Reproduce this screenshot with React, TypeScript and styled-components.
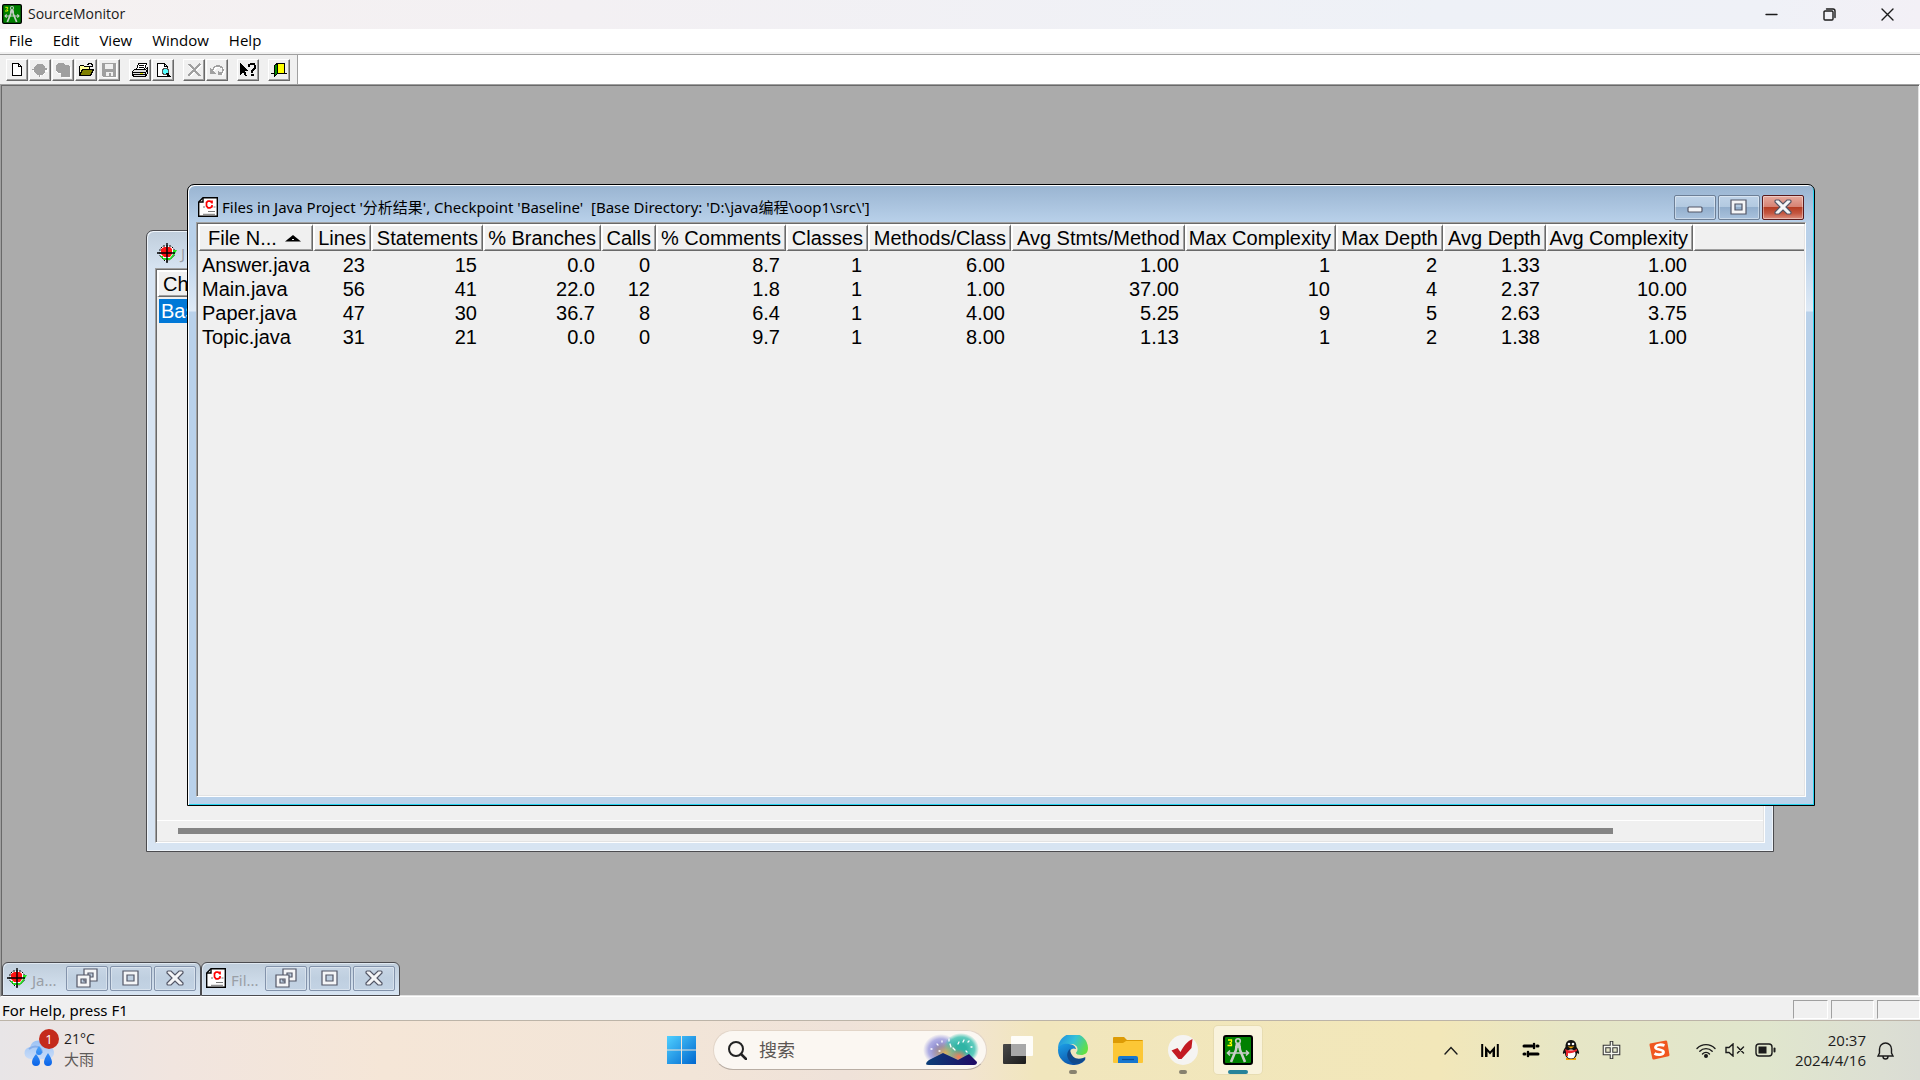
import React from "react";
import styled, { createGlobalStyle, css } from "styled-components";

const ui = `"Open Sans", "Noto Sans CJK SC", sans-serif`;
const caption = `"Noto Sans", "Noto Sans CJK SC", sans-serif`;
const grid = `"Liberation Sans", "Noto Sans CJK SC", sans-serif`;

const Global = createGlobalStyle`
  * { box-sizing: border-box; }
  body { margin: 0; overflow: hidden; font-family: ${ui}; font-size: 14px; color: #000; }
  button { font: inherit; color: inherit; padding: 0; margin: 0; border: 0; background: none; }
  svg { display: block; flex: none; }
`;

const Screen = styled.div`
  height: 100vh;
  display: flex;
  flex-direction: column;
  background: #f0f0f0;
`;

/* ---------- application frame ---------- */

const TitleBar = styled.header`
  height: 29px;
  display: flex;
  align-items: center;
  gap: 6px;
  padding: 0 4px 1px 2px;
  background: linear-gradient(90deg, #f5f1f1, #f3f0f3 30%, #eef1f7 75%, #eff1f7 92%, #f3f0f6);
`;
const AppTitle = styled.h1`
  flex: 1;
  margin: 0;
  font-size: 14px;
  line-height: 20px;
  font-weight: 400;
  color: #1a1a1a;
`;
const CaptionButtons = styled.div`
  display: flex;
`;
const CaptionButton = styled.button`
  width: 58px;
  height: 28px;
  display: grid;
  place-items: center;
`;
const MenuBar = styled.nav`
  height: 23px;
  display: flex;
  align-items: center;
  background: #fff;
`;
const MenuItem = styled.button`
  padding: 0 10px;
  font-size: 15px;
  line-height: 23px;
  &:first-child { padding-left: 9px; }
`;
const ToolbarRow = styled.div`
  height: 32px;
  display: flex;
  border-top: 2px solid #f0f0f0;
  background: #fff;
`;
const Toolbar = styled.div`
  width: 298px;
  display: flex;
  align-items: center;
  gap: 9px;
  padding-left: 6px;
  background: #f0f0f0;
  border-top: 1px solid #a0a0a0;
  border-right: 1px solid #a0a0a0;
`;
const ToolbarRest = styled.div`
  flex: 1;
  border-top: 1px solid #a0a0a0;
`;
const ToolGroup = styled.div`
  display: flex;
  gap: 1px;
`;
const ToolButton = styled.button`
  width: 22px;
  height: 22px;
  display: grid;
  place-items: center;
  background: #f0f0f0;
  border: 1px solid;
  border-color: #fff #696969 #696969 #fff;
  box-shadow: inset -1px -1px #a0a0a0;
`;

/* ---------- MDI area ---------- */

const Workspace = styled.main`
  position: relative;
  flex: 1;
  min-height: 0;
  display: flex;
  align-items: flex-end;
  padding-left: 1px;
  background: #ababab;
  border: 1px solid;
  border-color: #a0a0a0 #fff #fff #a0a0a0;
  box-shadow: inset 1px 1px #696969, inset -1px -1px #e3e3e3;
`;
const ChildWindow = styled.section<{ $active?: boolean; $left: number; $top: number }>`
  position: absolute;
  left: ${(p) => p.$left}px;
  top: ${(p) => p.$top}px;
  width: 1628px;
  height: 622px;
  display: flex;
  flex-direction: column;
  padding: 0 7px 7px;
  border: 1px solid ${(p) => (p.$active ? "#000" : "#4b4b4f")};
  border-radius: 7px 7px 0 0;
  ${(p) =>
    p.$active
      ? css`
          background: linear-gradient(#99b4d1, #b9d1ea 38px, #b9d1ea 60px, #dfeaf6 126px, #b9d1ea 127px);
          box-shadow: inset 1px 1px #fff, inset -1px -1px #25d2ee;
        `
      : css`
          background: linear-gradient(#bfcddb, #d7e4f2 38px);
          box-shadow: inset 1px 1px #eef4fa, inset -1px -1px #eef4fa;
        `}
`;
const WindowTitle = styled.div`
  height: 37px;
  flex: none;
  display: flex;
  align-items: center;
  gap: 4px;
  padding: 7px 3px 0 3px;
`;
const WindowName = styled.h2<{ $dim?: boolean }>`
  flex: 1;
  margin: 0;
  font-family: ${caption};
  font-size: 15px;
  line-height: 20px;
  font-weight: 400;
  white-space: pre;
  color: ${(p) => (p.$dim ? "#9a9fa6" : "#000")};
`;
const GlassButtons = styled.div`
  display: flex;
  gap: 2px;
`;
const GlassButton = styled.button<{ $close?: boolean }>`
  width: 42px;
  height: 25px;
  display: grid;
  place-items: center;
  border: 1px solid ${(p) => (p.$close ? "#5a1a1c" : "#6d7f96")};
  border-radius: 2px;
  background: ${(p) =>
    p.$close
      ? "linear-gradient(#e6a99d, #d68273 48%, #b53d24 50%, #c45640 75%, #dc8f80)"
      : "linear-gradient(#bfd3e8, #b2c9e0 48%, #93afcd 50%, #a9c2dd)"};
  box-shadow: inset 0 0 0 1px rgba(255, 255, 255, 0.4);
`;
const Client = styled.div`
  flex: 1;
  min-height: 0;
  margin: 0 1px 1px;
  display: flex;
  flex-direction: column;
  background: #f0f0f0;
  border: 1px solid;
  border-color: #a0a0a0 #fff #fff #a0a0a0;
  box-shadow: inset 1px 1px #696969, inset -1px -1px #e3e3e3;
  padding: 1px;
`;
const ListView = styled.table`
  width: 100%;
  table-layout: fixed;
  border-collapse: separate;
  border-spacing: 0;
  font-family: ${grid};
  font-size: 20px;
  line-height: 24px;
`;
const HeadCell = styled.th`
  padding: 0 0 2px;
  font-weight: 400;
  text-align: right;
  white-space: nowrap;
`;
const HeadFace = styled.div<{ $first?: boolean; $last?: boolean; $inset?: number }>`
  height: 27px;
  display: flex;
  align-items: center;
  justify-content: ${(p) => (p.$first ? "flex-start" : "flex-end")};
  gap: 8px;
  padding: 0 4px 0 ${(p) => p.$inset ?? 0}px;
  border: solid;
  border-width: 2px ${(p) => (p.$last ? 0 : 1)}px 1px 2px;
  border-color: #fff #696969 #696969 #fff;
  box-shadow: inset ${(p) => (p.$last ? 0 : -1)}px -1px #a0a0a0;
`;
const Cell = styled.td<{ $inset?: number }>`
  height: 24px;
  padding: 0 6px 0 0;
  text-align: right;
  white-space: nowrap;
  &:first-child { padding: 0 0 0 ${(p) => p.$inset ?? 4}px; text-align: left; }
`;
const SelectedText = styled.span`
  display: block;
  padding-left: 2px;
  color: #fff;
  background: #0078d7;
`;
const ScrollTrack = styled.div`
  margin-top: auto;
  height: 21px;
  padding: 7px 150px 0 21px;
  border-top: 1px solid #fff;
`;
const ScrollThumb = styled.div`
  height: 6px;
  background: #858585;
`;
const MinimizedWindow = styled.section`
  width: 199px;
  height: 34px;
  display: flex;
  align-items: center;
  gap: 4px;
  padding: 0 4px 2px;
  border: 1px solid #4b4b4f;
  border-radius: 6px 6px 0 0;
  background: linear-gradient(#bfcddb, #d7e4f2);
  box-shadow: inset 1px 1px #dfe8f1;
`;
const MinimizedName = styled.span`
  flex: 1;
  padding: 3px 0 0 1px;
  font-family: ${caption};
  font-size: 15px;
  line-height: 20px;
  white-space: nowrap;
  color: #9a9fa6;
`;
const MiniButton = styled.button`
  width: 42px;
  height: 25px;
  display: grid;
  place-items: center;
  border: 1px solid #8393ab;
  border-radius: 2px;
  background: linear-gradient(#c8d6e5, #bfcfe0 48%, #c3d3e4);
  box-shadow: inset 0 0 0 1px rgba(255, 255, 255, 0.35);
`;
const StatusBar = styled.footer`
  height: 23px;
  display: flex;
  align-items: stretch;
  gap: 3px;
  padding: 3px 0 1px 2px;
  background: #f0f0f0;
`;
const StatusText = styled.span`
  flex: 1;
  font-family: ${caption};
  font-size: 15px;
  line-height: 20px;
`;
const StatusPane = styled.span<{ $width: number }>`
  width: ${(p) => p.$width}px;
  border: 1px solid;
  border-color: #a0a0a0 #fff #fff #a0a0a0;
`;

/* ---------- desktop taskbar ---------- */

const Taskbar = styled.footer`
  height: 60px;
  flex: none;
  display: grid;
  grid-template-columns: 1fr auto 1fr;
  align-items: center;
  box-shadow: inset 0 1px #bcb4a8;
  background: linear-gradient(90deg, #e8e5e7 0, #f1e5df 9%, #f5e6d7 20%, #f2e5d8 36%, #efe2d9 44%, #f2e4d2 50%, #f1e6bd 54%, #f2e7b9 75%, #e6e6c6 82%, #e0e6cd 92%, #dcdfd3 98%, #dadcd4);
`;
const Weather = styled.button`
  justify-self: start;
  display: flex;
  align-items: center;
  gap: 4px;
  padding: 0 0 2px 24px;
  text-align: left;
  font-size: 14px;
  line-height: 20px;
`;
const WeatherText = styled.span`
  display: flex;
  flex-direction: column;
  color: #1c1c1c;
`;
const Muted = styled.span`
  font-size: 15px;
  color: #5e5a58;
`;
const TaskCenter = styled.div`
  display: flex;
  align-items: center;
  gap: 7px;
`;
const TaskButton = styled.button<{ $active?: boolean; $running?: boolean }>`
  position: relative;
  width: 48px;
  height: 48px;
  display: grid;
  place-items: center;
  border-radius: 4px;
  background: ${(p) => (p.$active ? "#f9f3dd" : "none")};
  box-shadow: ${(p) => (p.$active ? "0 0 0 1px rgba(190,180,140,.18)" : "none")};
  &::after {
    content: "";
    display: ${(p) => (p.$running ? "block" : "none")};
    position: absolute;
    bottom: 0;
    width: ${(p) => (p.$active ? 20 : 8)}px;
    height: 4px;
    border-radius: 2px;
    background: ${(p) => (p.$active ? "#27839a" : "#88826f")};
  }
`;
const Search = styled.label`
  width: 274px;
  height: 40px;
  display: flex;
  align-items: center;
  gap: 12px;
  padding: 0 7px 0 14px;
  border: 1px solid #e2d5c8;
  border-bottom-color: #b9aea4;
  border-radius: 20px;
  background: #fbf7f2;
`;
const SearchInput = styled.input`
  flex: 1;
  min-width: 0;
  height: 28px;
  padding: 0;
  border: 0;
  outline: 0;
  background: none;
  font-family: ${ui};
  font-size: 18px;
  color: #5b5653;
  &::placeholder { color: #5b5653; opacity: 1; }
`;
const Tray = styled.div`
  justify-self: end;
  display: flex;
  align-items: center;
  padding-right: 16px;
`;
const TrayButton = styled.button<{ $width: number }>`
  width: ${(p) => p.$width}px;
  height: 40px;
  display: grid;
  place-items: center;
`;
const Clock = styled.button`
  width: 81px;
  font-size: 15px;
  line-height: 20px;
  text-align: right;
  color: #1c1c1c;
`;
const ClockLine = styled.span`
  display: block;
`;

/* ---------- icons ---------- */

const CompassIcon = ({ size }: { size: number }) => (
  <svg width={size} height={size} viewBox="0 0 30 30">
    <rect x="1" y="1" width="28" height="28" rx="2" fill="#008000" stroke="#000" strokeWidth="2" />
    <path d="M5 5h3.500v2l-1.500 1 1.500 1v1.500h-4" fill="none" stroke="#ff0" strokeWidth="1.300" />
    <g fill="none" stroke="#c8cdc8" strokeWidth="1.600">
      <circle cx="15" cy="6" r="2.300" />
      <path d="M14 8.500 13 15 8 27M16 8.500 17 15l5 12" strokeWidth="2.600" />
      <path d="M5 18h20M7 15.500 4.500 18 7 20.500M23 15.500l2.500 2.500-2.500 2.500" />
      <path d="M12 12h6" />
    </g>
  </svg>
);

const TargetIcon = () => (
  <svg width="20" height="20" viewBox="0 0 20 20">
    <path d="M6 3h8l3 3v7l-6 5H8l-5-5V6z" fill="#fff" stroke="#000" strokeDasharray="2 1" />
    <path d="M3 13h3v2h7l3-4V7h4l-4 7-3 3H7z" fill="#1fe01f" />
    <path d="M7 4h6l2 2v5l-2 3H7l-3-3V6z" fill="#f11" />
    <path d="M10 0v20M0 10h18" stroke="#000" strokeWidth="1.400" />
  </svg>
);

const ReportIcon = () => (
  <svg width="20" height="20" viewBox="0 0 20 20">
    <path d="M5 .7h14.300v18.600H.7V5z" fill="#fff" stroke="#000" strokeWidth="1.400" />
    <path d="M5 1v4H1" fill="none" stroke="#000" strokeWidth="1.400" />
    <path d="M14 3.500v3M14 5h-1l-1-.8h-2L8.500 5.500v3.500l1.500 1.800h2l2-1V8" fill="none" stroke="#f00" strokeWidth="1.700" />
    <path d="M10 14.500h7M5 17.300h12M5 10h2M15.500 10h2" stroke="#777" strokeWidth="1" />
  </svg>
);

const tool = (children: React.ReactNode) => (
  <svg width="16" height="16" viewBox="0 0 16 16" shapeRendering="crispEdges">
    {children}
  </svg>
);

const toolIcons = {
  New: tool(<path d="M3.500 1.500h6l3 3v9h-9zM9.500 1.500v3h3" fill="#fff" stroke="#000" />),
  Add: tool(
    <>
      <path d="M8 2v2h3l2 2v1h3v3h-3v1l-2 2H9v2H8v-2H6l-3-2v-1H1V8h2V6l2-2h2V2z" fill="#fff" />
      <path d="M7 1v1h3l3 3v1h2v2h-2v2l-3 3H8v2H7v-2H5l-3-3V8H0V7h2V5l3-3h2V1z" fill="#a0a0a0" />
    </>
  ),
  "Add all": tool(
    <>
      <path d="M2 2h7l2 2h3l2 2v10H7v-4H4l-3-2z" fill="#fff" />
      <path d="M3 1h5l2 2h3l2 2v10H6v-4H3L1 9V3z" fill="#a0a0a0" />
    </>
  ),
  Open: tool(
    <>
      <path d="M1.500 13.500v-9l1-1h3l1 1h5v3" fill="#ff9" stroke="#000" />
      <path d="M1.500 13.500l3-6h11l-3 6z" fill="#808000" stroke="#000" />
      <path d="M9 2.500h1l1-1h2l1 1v2M12 4.500h3" fill="none" stroke="#000" />
    </>
  ),
  Save: tool(
    <>
      <path d="M2 2h14v14H2z" fill="#fff" />
      <path d="M1 1h14v14H2l-1-1z" fill="#a0a0a0" />
      <path d="M4 2h8v5H4zM5 10h7v4h-2v-3H8v3H5z" fill="#f0f0f0" />
    </>
  ),
  Print: tool(
    <>
      <path d="M4.500 7.500l2-6h8l-2 6z" fill="#fff" stroke="#000" />
      <path d="M7 3.500h5M6.500 5.500h5" stroke="#000" />
      <path d="M.5 9.500l2-2h11l2-2v6l-2 3h-11l-2-1z" fill="#ddd" stroke="#000" />
      <path d="M1 10.500h12v4M1 12.500h12M13.500 10.500l2-3" fill="none" stroke="#000" />
      <path d="M8 11h3v1H8z" fill="#dd0" />
    </>
  ),
  "Print preview": tool(
    <>
      <path d="M2.500 1.500h7l3 3v10h-10zM9.500 1.500v3h3" fill="#fff" stroke="#000" />
      <path d="M8 6h4v1h1v4h-1v1H8v-1H7V7h1z" fill="#5ff" stroke="#555" />
      <path d="M12 11l3 4" stroke="#000" strokeWidth="2" />
    </>
  ),
  Delete: tool(
    <>
      <path d="M4 4l10 10M15 3L4 14" stroke="#fff" strokeWidth="2" />
      <path d="M3 2l11 12M14 2L2 14" stroke="#a0a0a0" strokeWidth="2" />
    </>
  ),
  Undo: tool(
    <>
      <path d="M5 9a5 4.500 0 1 1 8 4" fill="none" stroke="#fff" strokeWidth="2" />
      <path d="M4 8a5 4.500 0 1 1 8 4" fill="none" stroke="#a0a0a0" strokeWidth="1.500" />
      <path d="M1 6v6h6zM9 9v4h4v-2z" fill="#a0a0a0" />
    </>
  ),
  "Context help": tool(
    <>
      <path d="M0 1l8 8H5l2 5H5l-2-4-3 3z" fill="#000" />
      <path d="M9 5V3l2-1h3l1 2v2l-3 3v2M11 13h3" fill="none" stroke="#000" strokeWidth="2" />
    </>
  ),
  Exit: tool(
    <>
      <path d="M5.500 1.500h8v10h-8z" fill="#ff0" stroke="#000" />
      <path d="M3.500 3.500l3-2v10l-3 3z" fill="#080" stroke="#000" />
      <path d="M0 11.500h3M13 11.500h3" stroke="#000" />
    </>
  ),
};
const toolGroups: (keyof typeof toolIcons)[][] = [
  ["New", "Add", "Add all", "Open", "Save"],
  ["Print", "Print preview"],
  ["Delete", "Undo"],
  ["Context help"],
  ["Exit"],
];

const glyph = (children: React.ReactNode) => (
  <svg width="22" height="20" viewBox="0 0 22 20" fill="#f4f5f7" stroke="#535666" strokeWidth="1.200">
    {children}
  </svg>
);
const MinGlyph = () => glyph(<rect x="4" y="10" width="14" height="5" rx="1" />);
const MaxGlyph = () => glyph(<path fillRule="evenodd" d="M3 3h15v14H3zM7 7v6h7V7z" />);
const RestoreGlyph = () =>
  glyph(
    <>
      <path fillRule="evenodd" d="M8 1h13v12H8zM12 5v4h5V5z" />
      <path fillRule="evenodd" d="M1 7h13v12H1zM5 11v4h5v-4z" />
    </>
  );
const CloseGlyph = () =>
  glyph(<path d="M3 4q0-1 1-1h3l4 4 4-4h3q1 0 1 1v1l-5 5 5 5v1q0 1-1 1h-3l-4-4-4 4H4q-1 0-1-1v-1l5-5-5-5z" />);

const line = (w: number, h: number, children: React.ReactNode) => (
  <svg width={w} height={h} viewBox={`0 0 ${w} ${h}`} fill="none" stroke="#1b1b1b" strokeWidth="1.400" strokeLinecap="round">
    {children}
  </svg>
);

const WeatherIcon = () => (
  <svg width="36" height="40" viewBox="0 0 36 40">
    <defs>
      <linearGradient id="cloud" x1="0" y1="0" x2="0" y2="1">
        <stop offset="0" stopColor="#9cc3f5" />
        <stop offset="1" stopColor="#c9dcf8" />
      </linearGradient>
      <linearGradient id="drop" x1="0" y1="0" x2="0" y2="1">
        <stop offset="0" stopColor="#4aa3fb" />
        <stop offset="1" stopColor="#0a63e8" />
      </linearGradient>
    </defs>
    <path d="M7 30a6 6 0 0 1-1-12 9 9 0 0 1 17-1 6.500 6.500 0 0 1 1 13z" fill="url(#cloud)" />
    <path d="M5 20c6-5 13-2 13 4" fill="none" stroke="#87afea" strokeWidth="2" />
    <path d="M15 17q3 4 3 6a3 3 0 0 1-6 0q0-2 3-6zM12 25q4 5 4 8a4 4 0 0 1-8 0q0-3 4-8zM24 24q4 6 4 9a4 4 0 0 1-8 0q0-3 4-9z" fill="url(#drop)" />
    <circle cx="25" cy="10" r="10" fill="#c42b1c" />
    <text x="25" y="15" textAnchor="middle" fontFamily="Open Sans" fontSize="13" fill="#fff">1</text>
  </svg>
);

const StartIcon = () => (
  <svg width="30" height="30" viewBox="0 0 30 30">
    <defs>
      <linearGradient id="start" x1="0" y1="0" x2="1" y2="1">
        <stop offset="0" stopColor="#50d0ff" />
        <stop offset="1" stopColor="#0067cf" />
      </linearGradient>
    </defs>
    <path d="M0 1h14v13.500H0zM15 1h14v13.500H15zM0 15.500h14V29H0zM15 15.500h14V29H15z" fill="url(#start)" />
  </svg>
);

const FireworksIcon = () => (
  <svg width="56" height="34" viewBox="0 0 56 34">
    <defs>
      <radialGradient id="glowA"><stop offset="0.200" stopColor="#8380c9" /><stop offset="0.700" stopColor="#8f8fdc" stopOpacity=".7" /><stop offset="1" stopColor="#9a9ae0" stopOpacity="0" /></radialGradient>
      <radialGradient id="glowB"><stop offset="0.300" stopColor="#2fb4a5" /><stop offset="0.750" stopColor="#39c0b0" stopOpacity=".8" /><stop offset="1" stopColor="#39c0b0" stopOpacity="0" /></radialGradient>
      <radialGradient id="glowC"><stop offset="0" stopColor="#d9b25c" /><stop offset="1" stopColor="#c5a76a" stopOpacity="0" /></radialGradient>
      <radialGradient id="glowD"><stop offset="0" stopColor="#ff7a50" /><stop offset="1" stopColor="#ff7a50" stopOpacity="0" /></radialGradient>
      <linearGradient id="hills" x1="0" x2="1"><stop offset="0" stopColor="#0c3f78" /><stop offset="1" stopColor="#1f0a66" /></linearGradient>
    </defs>
    <ellipse cx="18" cy="17" rx="18" ry="16" fill="url(#glowA)" />
    <ellipse cx="38" cy="16" rx="18" ry="16" fill="url(#glowB)" />
    <ellipse cx="22" cy="20" rx="14" ry="11" fill="url(#glowC)" />
    <ellipse cx="36" cy="24" rx="9" ry="8" fill="url(#glowD)" />
    <path d="M3 31q0-2 3-4l14-7 15 7 11-6 8 8q0 3-3 3H6q-3 0-3-1z" fill="url(#hills)" />
    <g stroke="#fff" strokeWidth="1.300" strokeLinecap="round">
      <path d="M8 16h1M14 11l1 1M19 8v1M26 6v2M16 18h1M27 11l1 3M30 15l2 2M35 11l1-2M40 9l1-2M45 9l1-1M48 14h1M43 18l1 1" />
    </g>
  </svg>
);

const TaskViewIcon = () => (
  <svg width="32" height="30" viewBox="0 0 32 30">
    <defs>
      <linearGradient id="tvd" x1="0" y1="0" x2="1" y2="1"><stop offset="0" stopColor="#4a4a4a" /><stop offset="1" stopColor="#1c1c1c" /></linearGradient>
    </defs>
    <rect x="1" y="9" width="23" height="20" rx="1" fill="url(#tvd)" />
    <rect x="9" y="1" width="22" height="20" rx="1" fill="#fff" fillOpacity=".9" />
    <rect x="9" y="9" width="15" height="12" fill="#a8a8a8" />
  </svg>
);

const EdgeIcon = () => (
  <svg width="30" height="30" viewBox="0 0 30 30">
    <defs>
      <linearGradient id="ea" x1="0" y1="0.200" x2="1" y2="0.600"><stop offset="0" stopColor="#1f8fe0" /><stop offset=".5" stopColor="#35c1d8" /><stop offset="1" stopColor="#62e043" /></linearGradient>
      <linearGradient id="eb" x1="0" y1="0" x2=".6" y2="1"><stop offset="0" stopColor="#1ca0e8" /><stop offset="1" stopColor="#0b4fa5" /></linearGradient>
    </defs>
    <path d="M0 14A15 15 0 0 1 30 13c0 5-3 7-7 7-3 0-5-1-5-2 0-1 1.500-1 1.500-4 0-3-3-5-6.500-5C6 9 0 12 0 14z" fill="url(#ea)" />
    <path d="M0 15C0 9 8 8 11 9c4 0 7 3 7 5-4-2-7 2-6 5 1 6 7 8 12 6 3-1 4-2 3 0-3 4-8 5-12 5A15 15 0 0 1 0 15z" fill="url(#eb)" />
    <path d="M12 14c-4 3-4 10 2 14 4 2 10 0 13-4 1-2 0-2-2-1-6 2-12 0-13-9z" fill="#114a8b" />
  </svg>
);

const FolderIcon = () => (
  <svg width="30" height="28" viewBox="0 0 30 28">
    <path d="M0 2q0-1 1-1h10l3 3h15q1 0 1 1v4H0z" fill="#dd9b05" />
    <path d="M0 7h10l3-2h17v21q0 1-1 1H1q-1 0-1-1z" fill="#fcc736" />
    <path d="M5 27v-5q0-2 2-2h16q2 0 2 2v5z" fill="#1777cf" />
    <path d="M9 23.500h12" stroke="#0b4d94" strokeWidth="1.200" />
  </svg>
);

const CheckIcon = () => (
  <svg width="30" height="30" viewBox="0 0 30 30">
    <circle cx="15" cy="15" r="15" fill="#f5f4f2" />
    <path d="M3.500 15.500l6-2.500 3 4c3-6 7-11 12-13l-1 9-10 11h-3z" fill="#c31a22" />
  </svg>
);

const MIcon = () => (
  <svg width="18" height="16" viewBox="0 0 18 16">
    <path d="M1.200 2v13M16.800 2v13" stroke="#000" strokeWidth="2" />
    <path d="M4 15V4l5 5.500L14 4v11h-2.500V9.500L9 12.500 6.500 9.500V15z" fill="#000" />
  </svg>
);
const SlidersIcon = () => (
  <svg width="18" height="16" viewBox="0 0 18 16" stroke="#000" strokeWidth="3" strokeLinecap="round">
    <path d="M2 4h8M15 4h1M2 12h1M8 12h8" />
    <path d="M12 2v4M6 10v4" strokeWidth="2.500" />
  </svg>
);
const PenguinIcon = () => (
  <svg width="18" height="20" viewBox="0 0 18 20">
    <path d="M4 18h10v2H4z" fill="#f5a400" />
    <path d="M9 0c4 0 5.500 3 5.500 7 2 3 3 5 2.500 7l-2-1c0 4-3 6-6 6s-6-2-6-6l-2 1c-.5-2 .5-4 2.500-7C3.500 3 5 0 9 0z" fill="#111" />
    <ellipse cx="9" cy="14" rx="4.500" ry="4.500" fill="#fff" />
    <circle cx="7" cy="4" r="1.300" fill="#fff" /><circle cx="11" cy="4" r="1.300" fill="#fff" />
    <path d="M5.500 6.500h7L9 8.500z" fill="#f8a800" />
    <path d="M3 9q6 3 12 0v2q-6 3-9 2v3H4v-4z" fill="#e8232c" />
  </svg>
);
const InputModeIcon = () => (
  <svg width="19" height="20" viewBox="0 0 19 20" fill="none">
    <path d="M2.500 6.500h14v7h-14zM9.500 1v18" stroke="#333" strokeWidth="3.600" />
    <path d="M2.500 6.500h14v7h-14zM9.500 1.800v16.400" stroke="#f6f7ee" strokeWidth="1.500" />
  </svg>
);
const SogouIcon = () => (
  <svg width="21" height="20" viewBox="0 0 21 20">
    <path d="M1 3.500 17 .5q1 0 1.200 1L20.500 15q0 1-1 1.300L5 19.500q-1.500.3-1.700-1L.5 5q0-1.300.5-1.500z" fill="#f0571f" />
    <path d="M15.500 5.500c-4-1.500-9-.5-9 2s8 1.500 8 4.500-6 3.500-9 1.500" fill="none" stroke="#fff" strokeWidth="2.800" />
  </svg>
);

/* ---------- data ---------- */

const columns: [string, number][] = [
  ["File N...", 115],
  ["Lines", 58],
  ["Statements", 112],
  ["% Branches", 118],
  ["Calls", 55],
  ["% Comments", 130],
  ["Classes", 82],
  ["Methods/Class", 143],
  ["Avg Stmts/Method", 174],
  ["Max Complexity", 151],
  ["Max Depth", 107],
  ["Avg Depth", 103],
  ["Avg Complexity", 147],
];
const rows = [
  ["Answer.java", "23", "15", "0.0", "0", "8.7", "1", "6.00", "1.00", "1", "2", "1.33", "1.00"],
  ["Main.java", "56", "41", "22.0", "12", "1.8", "1", "1.00", "37.00", "10", "4", "2.37", "10.00"],
  ["Paper.java", "47", "30", "36.7", "8", "6.4", "1", "4.00", "5.25", "9", "5", "2.63", "3.75"],
  ["Topic.java", "31", "21", "0.0", "0", "9.7", "1", "8.00", "1.13", "1", "2", "1.38", "1.00"],
];

const WindowButtons = () => (
  <GlassButtons>
    <GlassButton aria-label="Minimize"><MinGlyph /></GlassButton>
    <GlassButton aria-label="Maximize"><MaxGlyph /></GlassButton>
    <GlassButton $close aria-label="Close"><CloseGlyph /></GlassButton>
  </GlassButtons>
);

const Minimized = ({ icon, name }: { icon: React.ReactNode; name: string }) => (
  <MinimizedWindow>
    {icon}
    <MinimizedName>{name}</MinimizedName>
    <GlassButtons>
      <MiniButton aria-label="Restore"><RestoreGlyph /></MiniButton>
      <MiniButton aria-label="Maximize"><MaxGlyph /></MiniButton>
      <MiniButton aria-label="Close"><CloseGlyph /></MiniButton>
    </GlassButtons>
  </MinimizedWindow>
);

export default function App() {
  return (
    <Screen>
      <Global />
      <TitleBar>
        <CompassIcon size={20} />
        <AppTitle>SourceMonitor</AppTitle>
        <CaptionButtons>
          <CaptionButton aria-label="Minimize">{line(13, 13, <path d="M1 6.500h11" />)}</CaptionButton>
          <CaptionButton aria-label="Restore">
            {line(13, 13, <><rect x="1" y="3" width="9" height="9" rx="1" /><path d="M3.500 1H10q2 0 2 2v6.500" /></>)}
          </CaptionButton>
          <CaptionButton aria-label="Close">{line(13, 13, <path d="M1 1l11 11M12 1L1 12" />)}</CaptionButton>
        </CaptionButtons>
      </TitleBar>
      <MenuBar>
        {["File", "Edit", "View", "Window", "Help"].map((m) => (
          <MenuItem key={m}>{m}</MenuItem>
        ))}
      </MenuBar>
      <ToolbarRow>
        <Toolbar>
          {toolGroups.map((group) => (
            <ToolGroup key={group[0]}>
              {group.map((name) => (
                <ToolButton key={name} aria-label={name}>{toolIcons[name]}</ToolButton>
              ))}
            </ToolGroup>
          ))}
        </Toolbar>
        <ToolbarRest />
      </ToolbarRow>

      <Workspace>
        <ChildWindow $left={145} $top={145}>
          <WindowTitle>
            <TargetIcon />
            <WindowName $dim>J</WindowName>
          </WindowTitle>
          <Client>
            <ListView>
              <colgroup><col style={{ width: 140 }} /><col /></colgroup>
              <thead>
                <tr>
                  <HeadCell><HeadFace $first $inset={4}>Ch</HeadFace></HeadCell>
                  <HeadCell><HeadFace $last /></HeadCell>
                </tr>
              </thead>
              <tbody>
                <tr>
                  <Cell $inset={2}><SelectedText>Bas</SelectedText></Cell>
                  <Cell />
                </tr>
              </tbody>
            </ListView>
            <ScrollTrack><ScrollThumb /></ScrollTrack>
          </Client>
        </ChildWindow>

        <ChildWindow $active $left={186} $top={99}>
          <WindowTitle>
            <ReportIcon />
            <WindowName>{"Files in Java Project '分析结果', Checkpoint 'Baseline'  [Base Directory: 'D:\\java编程\\oop1\\src\\']"}</WindowName>
            <WindowButtons />
          </WindowTitle>
          <Client>
            <ListView>
              <colgroup>
                {columns.map(([name, width]) => <col key={name} style={{ width }} />)}
                <col />
              </colgroup>
              <thead>
                <tr>
                  {columns.map(([name], i) => (
                    <HeadCell key={name}>
                      <HeadFace $first={i === 0} $inset={i === 0 ? 8 : 0}>
                        {name}
                        {i === 0 && (
                          <svg width="16" height="7" viewBox="0 0 16 7"><path d="M0 6.500h16L8 0z" fill="#000" /><path d="M7 4.500h2" stroke="#f0f0f0" /></svg>
                        )}
                      </HeadFace>
                    </HeadCell>
                  ))}
                  <HeadCell><HeadFace $last /></HeadCell>
                </tr>
              </thead>
              <tbody>
                {rows.map((row) => (
                  <tr key={row[0]}>
                    {row.map((value, i) => <Cell key={i}>{value}</Cell>)}
                    <Cell />
                  </tr>
                ))}
              </tbody>
            </ListView>
          </Client>
        </ChildWindow>

        <Minimized icon={<TargetIcon />} name="Ja..." />
        <Minimized icon={<ReportIcon />} name="Fil..." />
      </Workspace>

      <StatusBar>
        <StatusText>For Help, press F1</StatusText>
        <StatusPane $width={35} />
        <StatusPane $width={43} />
        <StatusPane $width={43} />
      </StatusBar>

      <Taskbar>
        <Weather>
          <WeatherIcon />
          <WeatherText>
            <span>21°C</span>
            <Muted>大雨</Muted>
          </WeatherText>
        </Weather>
        <TaskCenter>
          <TaskButton aria-label="Start"><StartIcon /></TaskButton>
          <Search>
            <svg width="19" height="19" viewBox="0 0 19 19" fill="none" stroke="#222" strokeWidth="2" strokeLinecap="round">
              <circle cx="8" cy="8" r="7" /><path d="M13 13l5 5" strokeWidth="2.500" />
            </svg>
            <SearchInput aria-label="搜索" placeholder="搜索" />
            <FireworksIcon />
          </Search>
          <TaskButton aria-label="Task view"><TaskViewIcon /></TaskButton>
          <TaskButton aria-label="Edge" $running><EdgeIcon /></TaskButton>
          <TaskButton aria-label="Files"><FolderIcon /></TaskButton>
          <TaskButton aria-label="Tasks" $running><CheckIcon /></TaskButton>
          <TaskButton aria-label="SourceMonitor" $active $running><CompassIcon size={30} /></TaskButton>
        </TaskCenter>
        <Tray>
          <TrayButton $width={38} aria-label="Hidden icons">{line(14, 9, <path d="M1 8l6-6.500L13 8" />)}</TrayButton>
          <TrayButton $width={40} aria-label="Monitor"><MIcon /></TrayButton>
          <TrayButton $width={42} aria-label="Mixer"><SlidersIcon /></TrayButton>
          <TrayButton $width={38} aria-label="QQ"><PenguinIcon /></TrayButton>
          <TrayButton $width={42} aria-label="Input mode"><InputModeIcon /></TrayButton>
          <TrayButton $width={54} aria-label="Sogou"><SogouIcon /></TrayButton>
          <TrayButton $width={39} aria-label="Network">
            {line(20, 16, <><path d="M1 6.500a12.500 12.500 0 0 1 18 0M3.800 9.300a8.600 8.600 0 0 1 12.400 0M6.500 12a5 5 0 0 1 7 0" /><circle cx="10" cy="14" r="1.300" fill="#1b1b1b" /></>)}
          </TrayButton>
          <TrayButton $width={20} aria-label="Volume">
            {line(20, 14, <><path d="M1 4.500h3L8 1v12L4 9.500H1zM12.500 4l6 6M18.500 4l-6 6" /></>)}
          </TrayButton>
          <TrayButton $width={40} aria-label="Battery">
            {line(21, 14, <><rect x="1" y="1" width="16" height="12" rx="3" /><rect x="3.500" y="3.500" width="8" height="7" fill="#1b1b1b" stroke="none" /><path d="M19.500 5.500v3" strokeWidth="2" /></>)}
          </TrayButton>
          <Clock>
            <ClockLine>20:37</ClockLine>
            <ClockLine>2024/4/16</ClockLine>
          </Clock>
          <TrayButton $width={38} aria-label="Notifications">
            {line(17, 19, <><path d="M1 15l1.500-3V8a6 6 0 0 1 12 0v4l1.500 3zM6 15.500a2.500 2.500 0 0 0 5 0" /></>)}
          </TrayButton>
        </Tray>
      </Taskbar>
    </Screen>
  );
}
